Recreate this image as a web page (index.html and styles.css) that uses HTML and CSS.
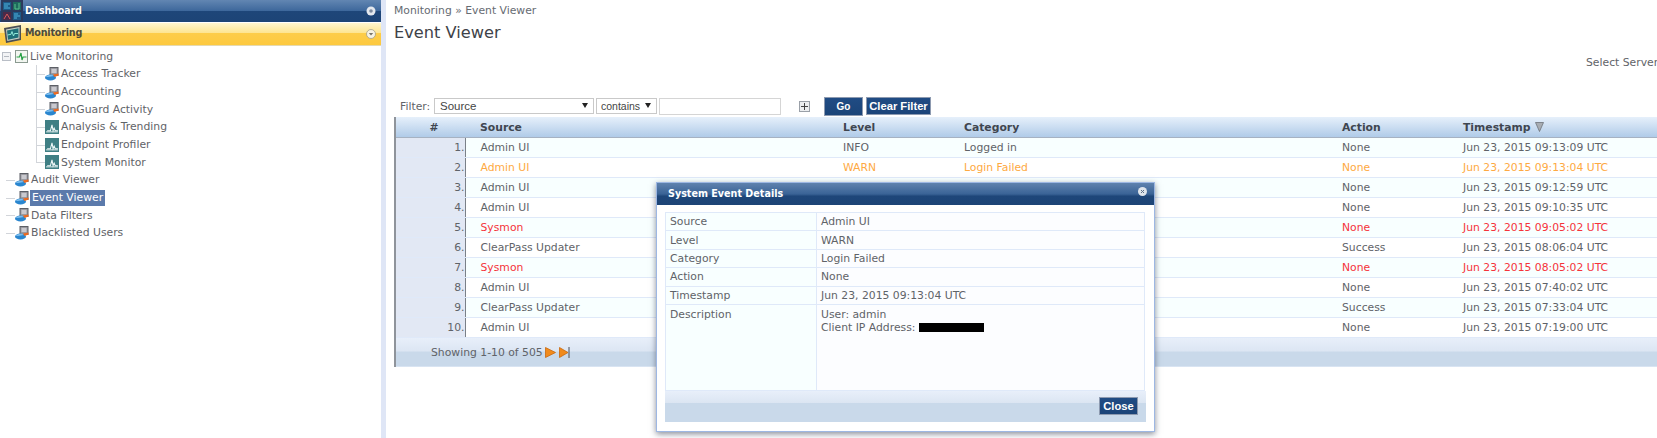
FILE: index.html
```html
<!DOCTYPE html>
<html lang="en">
<head>
<meta charset="utf-8">
<title>Event Viewer</title>
<link rel="stylesheet" href="styles.css">
</head>
<body>
<svg class="defs" width="0" height="0" aria-hidden="true">
  <symbol id="doc" viewBox="0 0 14 14">
    <rect x="5" y="0.5" width="8" height="8" fill="#9a9aa0" stroke="#5c5f66"/>
    <rect x="6.5" y="2" width="5" height="4" fill="#c9c9cf"/>
    <ellipse cx="5.5" cy="10.5" rx="5.5" ry="3" fill="#2a86cf"/>
    <path d="M0.5 10Q5 6 9 9L3 10Z" fill="#7cbcec"/>
    <path d="M8 7.5L13.5 6.5V8.5L9.5 10Z" fill="#ee6a1f"/>
  </symbol>
  <symbol id="chart" viewBox="0 0 13 13">
    <rect width="13" height="13" fill="#3f7f84"/>
    <path d="M1 11H12" stroke="#d5e6e6" stroke-width="1"/>
    <path d="M2 10H5L6.500 4.500L7.500 10L8.500 7.500L9.500 10H12" fill="none" stroke="#eef7f7" stroke-width="1"/>
  </symbol>
</svg>
<div class="page">
  <aside class="sidebar">
    <div class="acc acc-blue">
      <svg class="acc-icon" width="22" height="22" viewBox="0 0 22 22">
        <rect width="22" height="22" fill="#2b3a5c"/>
        <rect x="2" y="2" width="8" height="8" fill="#1d5a88"/><path d="M3 4H9M3 6H7M3 8H9" stroke="#4fb2dc"/>
        <rect x="12" y="2" width="8" height="8" fill="#1e6a5c"/><path d="M14 9V4M18 9V3M14 9H18" stroke="#58c08e"/>
        <rect x="2" y="12" width="8" height="8" fill="#4c2a48"/><path d="M3 19L6 14L9 19" fill="none" stroke="#d85a5a"/>
        <rect x="12" y="12" width="8" height="8" fill="#1d5a88"/><path d="M13 14H17M13 16H19M13 18H16" stroke="#4fb2dc"/>
      </svg>
      <span class="acc-label">Dashboard</span>
      <svg class="acc-toggle" width="10" height="10" viewBox="0 0 10 10"><circle cx="5" cy="5" r="4.500" fill="#e4e8ee"/><circle cx="5" cy="5" r="1.800" fill="#7d8ba0"/></svg>
    </div>
    <div class="acc acc-gold">
      <svg class="acc-icon" width="22" height="22" viewBox="0 0 22 22">
        <path d="M3 5L20 2V17L5 20Z" fill="#4b4f55"/>
        <path d="M5 6.500L18.500 4V15.500L6.300 18Z" fill="#c6d0c6"/>
        <path d="M6 7.500L17.500 5.300V14.600L7 16.800Z" fill="#1f6f78"/>
        <path d="M6.500 12L10 11.300L11 8.500L12.500 13L13.500 10.500H17" fill="none" stroke="#8fe8d8"/>
      </svg>
      <span class="acc-label">Monitoring</span>
      <svg class="acc-toggle" width="10" height="10" viewBox="0 0 10 10"><circle cx="5" cy="5" r="4.500" fill="#f7f3e4" stroke="#9a9684" stroke-width="0.700"/><path d="M2.800 4L5 6.500L7.200 4Z" fill="#77746a"/></svg>
    </div>
    <ul class="tree">
      <li class="node root">
        <span class="collapse"></span>
        <svg class="ic" width="13" height="13" viewBox="0 0 13 13"><rect x="0.500" y="0.500" width="12" height="12" fill="#f3f6f1" stroke="#8a9a90"/><path d="M1.500 7H4.500L6 3L7 10L8 7H11.500" fill="none" stroke="#27a045" stroke-width="1.200"/></svg>
        <span class="lbl">Live Monitoring</span>
      </li>
      <li class="node leaf"><svg class="ic" width="14" height="14"><use href="#doc"/></svg><span class="lbl">Access Tracker</span></li>
      <li class="node leaf"><svg class="ic" width="14" height="14"><use href="#doc"/></svg><span class="lbl">Accounting</span></li>
      <li class="node leaf"><svg class="ic" width="14" height="14"><use href="#doc"/></svg><span class="lbl">OnGuard Activity</span></li>
      <li class="node leaf"><svg class="ic" width="14" height="14"><use href="#chart"/></svg><span class="lbl">Analysis &amp; Trending</span></li>
      <li class="node leaf"><svg class="ic" width="14" height="14"><use href="#chart"/></svg><span class="lbl">Endpoint Profiler</span></li>
      <li class="node leaf last"><svg class="ic" width="14" height="14"><use href="#chart"/></svg><span class="lbl">System Monitor</span></li>
      <li class="node top"><svg class="ic" width="14" height="14"><use href="#doc"/></svg><span class="lbl">Audit Viewer</span></li>
      <li class="node top"><svg class="ic" width="14" height="14"><use href="#doc"/></svg><span class="lbl active">Event Viewer</span></li>
      <li class="node top"><svg class="ic" width="14" height="14"><use href="#doc"/></svg><span class="lbl">Data Filters</span></li>
      <li class="node top"><svg class="ic" width="14" height="14"><use href="#doc"/></svg><span class="lbl">Blacklisted Users</span></li>
    </ul>
  </aside>
  <main class="main">
    <div class="crumb">Monitoring » Event Viewer</div>
    <h1 class="title">Event Viewer</h1>
    <div class="server">Select Server</div>
    <div class="filter">
      <label class="filter-label">Filter:</label>
      <span class="fake-select sel-source">Source</span>
      <span class="fake-select sel-op">contains</span>
      <input class="filter-input" type="text">
      <span class="plus"></span>
      <button class="btn btn-go">Go</button>
      <button class="btn btn-clear">Clear Filter</button>
    </div>
    <table class="grid">
      <colgroup>
        <col class="c-num"><col class="c-source"><col class="c-level"><col class="c-cat"><col class="c-action"><col class="c-time">
      </colgroup>
      <thead>
        <tr><th class="num-h">#</th><th>Source</th><th>Level</th><th>Category</th><th>Action</th><th>Timestamp <svg class="sort" width="9" height="10" viewBox="0 0 9 10"><path d="M0.500 0.500H8.500L4.500 9.500Z" fill="#a8adb3" stroke="#6d7278" stroke-width="0.800"/></svg></th></tr>
      </thead>
      <tbody>
        <tr><td class="n">1.</td><td>Admin UI</td><td>INFO</td><td>Logged in</td><td>None</td><td>Jun 23, 2015 09:13:09 UTC</td></tr>
        <tr class="warn"><td class="n">2.</td><td>Admin UI</td><td>WARN</td><td>Login Failed</td><td>None</td><td>Jun 23, 2015 09:13:04 UTC</td></tr>
        <tr><td class="n">3.</td><td>Admin UI</td><td></td><td></td><td>None</td><td>Jun 23, 2015 09:12:59 UTC</td></tr>
        <tr><td class="n">4.</td><td>Admin UI</td><td></td><td></td><td>None</td><td>Jun 23, 2015 09:10:35 UTC</td></tr>
        <tr class="err"><td class="n">5.</td><td>Sysmon</td><td></td><td></td><td>None</td><td>Jun 23, 2015 09:05:02 UTC</td></tr>
        <tr><td class="n">6.</td><td>ClearPass Updater</td><td></td><td></td><td>Success</td><td>Jun 23, 2015 08:06:04 UTC</td></tr>
        <tr class="err"><td class="n">7.</td><td>Sysmon</td><td></td><td></td><td>None</td><td>Jun 23, 2015 08:05:02 UTC</td></tr>
        <tr><td class="n">8.</td><td>Admin UI</td><td></td><td></td><td>None</td><td>Jun 23, 2015 07:40:02 UTC</td></tr>
        <tr><td class="n">9.</td><td>ClearPass Updater</td><td></td><td></td><td>Success</td><td>Jun 23, 2015 07:33:04 UTC</td></tr>
        <tr><td class="n">10.</td><td>Admin UI</td><td></td><td></td><td>None</td><td>Jun 23, 2015 07:19:00 UTC</td></tr>
      </tbody>
      <tfoot>
        <tr><td colspan="6" class="foot">
          <span class="foot-inner">Showing 1-10 of 505
            <svg class="pg pg-next" width="11" height="11" viewBox="0 0 11 11"><path d="M0.500 0.500L10.500 5.500L0.500 10.500Z" fill="#f08a1c" stroke="#c9680e" stroke-width="0.800"/></svg>
            <svg class="pg" width="11" height="11" viewBox="0 0 11 11"><path d="M0.500 0.500L9 5.500L0.500 10.500Z" fill="#f08a1c" stroke="#c9680e" stroke-width="0.800"/><path d="M10 0V11" stroke="#4a4f58"/></svg>
          </span>
        </td></tr>
      </tfoot>
    </table>
  </main>
</div>
<section class="modal">
  <header class="modal-head">
    <span>System Event Details</span>
    <svg class="modal-x" width="9" height="9" viewBox="0 0 9 9"><circle cx="4.500" cy="4.500" r="4.500" fill="#dfe5ec"/><path d="M3 3L6 6M6 3L3 6" stroke="#5d6f86"/></svg>
  </header>
  <div class="modal-body">
    <table class="details">
      <colgroup><col class="d-k"><col></colgroup>
      <tr><td>Source</td><td>Admin UI</td></tr>
      <tr><td>Level</td><td>WARN</td></tr>
      <tr><td>Category</td><td>Login Failed</td></tr>
      <tr><td>Action</td><td>None</td></tr>
      <tr><td>Timestamp</td><td>Jun 23, 2015 09:13:04 UTC</td></tr>
      <tr class="desc"><td>Description</td><td>User: admin<br>Client IP Address: <span class="redact"></span></td></tr>
    </table>
    <div class="modal-foot"><button class="btn btn-close">Close</button></div>
  </div>
</section>
</body>
</html>
```

FILE: styles.css
```css
* { box-sizing: border-box; }
html, body { margin: 0; padding: 0; height: 100%; overflow: hidden; background: #fff; }
body { font-family: "DejaVu Sans", Verdana, sans-serif; font-size: 10.8px; color: #5f6368; position: relative; }
.defs { position: absolute; }
.page { display: flex; height: 438px; width: 1657px; }

.sidebar { width: 386px; flex: none; border-right: 5px solid #dfe6f6; height: 100%; }
.acc { display: flex; align-items: center; height: 23px; font-weight: bold; font-size: 9.6px; letter-spacing: -0.2px; padding-right: 5px; }
.acc-icon { flex: none; margin: 0 2px 0 1px; }
.acc-label { flex: 1; position: relative; top: -1px; }
.acc-blue { height: 22px; margin-bottom: 1px; color: #fff; background: linear-gradient(#6286b2 0, #3d679b 50%, #1e4679 50%, #1d4476 100%); text-shadow: 0 0 1px #20406c; }
.acc-gold { height: 23px; color: #4d4a3c; background: linear-gradient(#fff6cf 0, #fde591 45%, #fdcd4a 45%, #fdc93f 100%); border-bottom: 1px solid #e5d9b0; }
.acc-gold .acc-label { top: -2px; }

.tree { list-style: none; margin: 1.5px 0 0; padding: 0; }
.node { display: flex; align-items: center; height: 17.67px; position: relative; white-space: nowrap; }
.root { padding-left: 15px; }
.leaf { padding-left: 45px; }
.top { padding-left: 15px; }
.ic { flex: none; margin-right: 2px; }
.active { background: #5b7aab; color: #fff; height: 16px; line-height: 16px; padding: 0 2px; margin-left: -1px; }
.collapse { position: absolute; left: 2px; top: 4px; width: 9px; height: 9px; border: 1px solid #b9bec6; background: linear-gradient(90deg, #b3b8bf, #b3b8bf) center / 5px 1px no-repeat #f2f3f5; }
.leaf::before { content: ""; position: absolute; left: 36px; top: 0; bottom: 0; border-left: 1px solid #d2d5da; }
.leaf::after { content: ""; position: absolute; left: 36px; width: 9px; top: 50%; border-top: 1px solid #d2d5da; }
.leaf.last::before { bottom: 50%; }
.top::after { content: ""; position: absolute; left: 6px; width: 9px; top: 50%; border-top: 1px solid #d2d5da; }

.main { flex: 1; min-width: 0; padding-left: 8px; position: relative; }
.crumb { margin-top: 3px; height: 15px; line-height: 15px; color: #666b72; }
.title { margin: 4px 0 0; font-weight: normal; font-size: 16.2px; line-height: 22px; color: #3e4248; }
.server { margin-top: 12px; padding-left: 1192px; height: 14px; line-height: 14px; white-space: nowrap; }

.filter { display: flex; align-items: center; height: 20px; margin-top: 26px; padding-left: 6px; }
.filter-label { width: 34px; }
.fake-select { display: flex; align-items: center; height: 16px; background: #fff; border: 1px solid #c9c9c9; font-family: "Liberation Sans", Arial, sans-serif; font-size: 11.5px; color: #444; padding-left: 5px; position: relative; }
.fake-select::after { content: ""; position: absolute; right: 5px; top: 4px; border-style: solid; border-width: 5px 3px 0; border-color: #222 transparent transparent; }
.sel-source { width: 160px; margin-right: 2px; }
.sel-op { width: 61px; margin-right: 2px; padding-left: 4px; font-size: 10.5px; }
.filter-input { width: 122px; height: 17px; border: 1px solid #d5d5d5; padding: 0; margin: 0; background: #fff; }
.plus { width: 11px; height: 11px; margin-left: 18px; border: 1px solid #9aa0a8; background: linear-gradient(#444, #444) center / 7px 1px no-repeat, linear-gradient(#444, #444) center / 1px 7px no-repeat, #eceef0; }
.btn { font-family: "Liberation Sans", Arial, sans-serif; color: #fff; border: 1px solid #8d9ab0; padding: 0; background: linear-gradient(#204c84, #1b4478); cursor: pointer; white-space: nowrap; }
.btn-go { width: 39px; height: 19px; margin-left: 14px; font-size: 10px; font-weight: bold; }
.btn-clear { width: 65px; height: 18px; margin-left: 3px; font-size: 11.2px; font-weight: bold; }

.grid { border-collapse: collapse; table-layout: fixed; width: 1263px; margin-top: 1px; border-left: 2px solid #8f949b; }
.c-num { width: 70px; }
.c-source { width: 363px; }
.c-level { width: 121px; }
.c-cat { width: 378px; }
.c-action { width: 121px; }
.c-time { width: 210px; }
.grid th { height: 20px; padding: 1px 0 0 15px; text-align: left; font-size: 10.8px; font-weight: bold; color: #3f4650; background: linear-gradient(#e6f0fb, #b0cbe8); border-bottom: 1px solid #a6b2c2; }
.grid th.num-h { text-align: center; padding: 1px 0 0 7px; }
.sort { vertical-align: -1px; margin-left: 1px; }
.grid td { height: 20px; padding: 1px 0 0 15px; border-bottom: 1px solid #dfe9f9; white-space: nowrap; background: #fff; }
.grid tbody tr:nth-child(odd) td { background: #f8ffff; }
.grid tbody td.n, .grid tbody tr:nth-child(odd) td.n { background: #e2e8f4; text-align: right; padding: 1px 0 0; border-right: 1px solid #7a8088; color: #5f6368; }
.grid .warn td { color: #fea942; }
.grid .err td { color: #f5333a; }
.grid td.foot { height: 30px; padding: 0 0 0 35px; border-bottom: 0; background: linear-gradient(#e8effa 0, #dbe5f2 50%, #c9d9ea 50%, #c9d9ea 100%); }
.foot-inner { display: flex; align-items: center; gap: 3px; }
.pg { flex: none; }
.pg-next { margin-left: -1px; }

.modal { position: absolute; left: 656px; top: 182px; width: 499px; height: 250px; background: #fff; border: 1px solid #9db7e3; box-shadow: 0 2px 6px rgba(40, 50, 70, .55); }
.modal-head { display: flex; justify-content: space-between; align-items: flex-start; height: 22px; padding: 5px 7px 0 11px; font-size: 9.6px; font-weight: bold; color: #fff; background: linear-gradient(#5f82ae 0, #3a6396 50%, #1e4679 60%, #1d4476 100%); }
.modal-x { margin-top: -1px; }
.modal-body { padding: 7px 8px 0; }
.details { width: 480px; border-collapse: collapse; table-layout: fixed; }
.d-k { width: 151px; }
.details td { height: 18.4px; padding: 0 0 0 4px; border: 1px solid #dfe9f9; vertical-align: middle; background: #fcfdff; }
.details td:first-child { background: #f8ffff; }
.details .desc td { height: 86px; vertical-align: top; padding-top: 3px; line-height: 13px; }
.redact { display: inline-block; width: 65px; height: 9px; background: #000; vertical-align: -1px; }
.modal-foot { display: flex; justify-content: flex-end; align-items: center; height: 31px; padding-right: 8px; background: linear-gradient(#e8effa 0, #dbe5f2 40%, #c9d9ea 40%, #c9d9ea 100%); }
.btn-close { width: 39px; height: 18px; font-size: 11.2px; font-weight: bold; }
```
